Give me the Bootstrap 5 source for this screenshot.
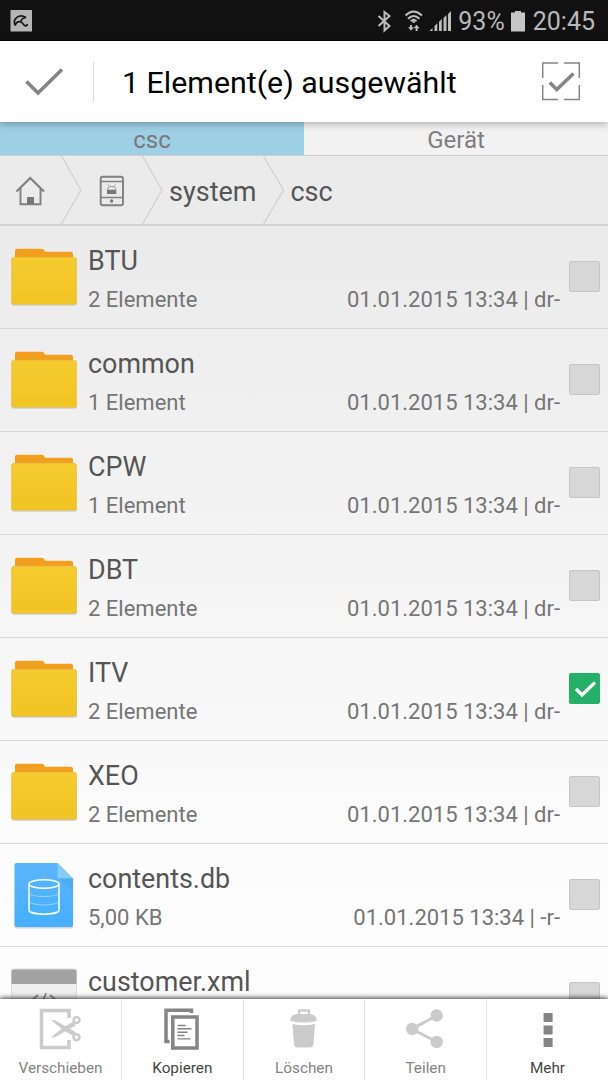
<!DOCTYPE html>
<html lang="de">
<head>
<meta charset="utf-8">
<meta name="viewport" content="width=device-width, initial-scale=1">
<title>Dateimanager</title>
<link href="https://cdn.jsdelivr.net/npm/bootstrap@5.3.0/dist/css/bootstrap.min.css" rel="stylesheet">
<style>
body{font-family:Roboto,"Noto Sans",sans-serif;color:#555;background:#fff}
svg{display:block;flex:none}
.app-screen{width:608px;height:1080px;background:linear-gradient(#ebebeb 225px,#fdfdfd 900px)}
.status-row{height:41px;background:#111;border-bottom:1px solid #000;color:#b9b9b9;font-size:25px;line-height:41px;padding:2px 13px 0 0}
.battery{margin-left:6px}
.select-bar{height:81px;background:#fff;color:#000;font-size:30.350px;z-index:2;box-shadow:0 1px 8px rgba(0,0,0,.35)}
.select-title{margin-left:28px;padding-top:2px}
.bar-rule{width:1px;height:40px;background:#ddd}
.tab-strip{height:34px;border-bottom:1px solid #d0d0d0;font-size:24px;line-height:36px;color:#7e7e7e;background:#f2f2f2}
.tab-on{background:#9dd0e5;color:#7b7878}
.crumbs{height:70px;border-bottom:2px solid #d2d2d2;font-size:27px;line-height:72px}
.file-row{height:103px;border-bottom:1px solid #d8d8d8}
.file-text{padding-top:16px;line-height:38px}
.file-title{font-size:26.900px;height:39px}
.file-meta{font-size:22px;color:#757575}
.tick{width:31px;height:31px;margin:35px 8px 0 9px;background:#d7d7d7;border:1px solid #c6c6c6;border-radius:2px;flex:none}
.tick-on{background:#24b069;border-color:#24b069}
.action-bar{height:81px;background:#fff;font-size:15.300px;line-height:22px;color:#848484;z-index:2;box-shadow:0 -1px 5px rgba(0,0,0,.8)}
.action-bar>div+div{border-left:1px solid #e6e6e6}
.act-cell{flex:1 1 0}
.act-on{color:#454545}
</style>
</head>
<body class="overflow-hidden">
<svg width="0" height="0" class="position-absolute">
  <defs>
    <linearGradient id="yel" x2="0" y2="1"><stop stop-color="#f5cb2f"/><stop offset="1" stop-color="#f2c425"/></linearGradient>
    <linearGradient id="blu" x2="0" y2="1"><stop stop-color="#5bb4fb"/><stop offset="1" stop-color="#45b0ff"/></linearGradient>
    <symbol id="folder" viewBox="0 .7 88 102">
      <path d="M15 33V25.500q0-2 2-2h25q2 0 3 3h26q2 0 2 2v5z" fill="#f29e1f"/>
      <rect x="11.500" y="32.500" width="65.500" height="48" rx="2.500" fill="#cfcfcf"/>
      <rect x="11.500" y="32" width="65" height="47" rx="2" fill="url(#yel)" stroke="#e4c34a" stroke-width=".6"/>
    </symbol>
  </defs>
</svg>
<div class="app-screen d-flex flex-column overflow-hidden">
  <div class="status-row d-flex align-items-center flex-shrink-0">
    <svg width="33" height="40"><rect x="10.500" y="9" width="21.500" height="21.500" fill="#b5b5b5"/><path d="M15.200 24.500C12 17.500 19.500 12.500 26 16.500M15.200 24.500Q16.500 20 20.800 20.800Q21.500 17 26 16.500M20.800 20.500l3.800 4q2.200 1.200 2.700-1.500" fill="none" stroke="#161616" stroke-width="1.700"/></svg>
    <svg class="ms-auto" width="86" height="40" fill="none" stroke="#bdbdbd">
      <path d="M6.500 15l11 10-5 4.500V11l5 4-11 10" stroke-width="2"/>
      <path d="M33.500 14.500Q41.500 6.500 50 14.500M36 17.800Q41.500 12 47.500 17.800M38.800 20.300Q41.500 17.500 44.500 20.300" stroke-width="2"/>
      <path d="M41.700 20v2M39 24v3M44.600 26v4" stroke-width="2"/>
      <path d="M36 26.300h6l-3 3.500zM41.600 27.200h6l-3-3.500z" fill="#bdbdbd" stroke="none"/>
      <path d="M57.500 30l3-3v3zM62.500 30v-5l2.800-2.800V30zM67 30v-9.300l2.800-2.800V30zM71.500 30v-13l3-3v16zM76 30V13l3-3v20z" fill="#bdbdbd" stroke="none"/>
    </svg>
    <span>93%</span>
    <svg class="battery" width="14" height="41"><path d="M4 10h6v1.500h4V30.500H0v-19h4z" fill="#c6c6c6"/></svg>
    <span class="ms-2">20:45</span>
  </div>
  <div class="select-bar d-flex align-items-center flex-shrink-0 position-relative">
    <svg width="93" height="81"><path d="M26.500 40.500L38 52 62 28.500" fill="none" stroke="#858585" stroke-width="3.600"/></svg>
    <div class="bar-rule"></div>
    <span class="select-title">1 Element(e) ausgewählt</span>
    <svg class="ms-auto" width="66" height="81" fill="none" stroke="#858585"><path d="M.7 37V22H16M22 22h15.300v15M37.300 44v14.500H22M16 58.500H.7V44" stroke-width="1.500"/><path d="M7.800 41.500l7 7L31.500 32.500" stroke-width="3.600"/></svg>
  </div>
  <div class="tab-strip d-flex text-center flex-shrink-0"><div class="tab-on w-50">csc</div><div class="w-50">Gerät</div></div>
  <div class="crumbs d-flex flex-shrink-0">
    <svg width="169" height="68" fill="none" stroke="#808080">
      <path d="M61.500 0l19.500 34L61.500 68M142.500 0L162 34 142.500 68" stroke="#d0d0d0" stroke-width="1.200"/>
      <path d="M16.500 35.500L30.200 22 44 35.500" stroke-width="2.300"/><path d="M20.500 32v16.200h20V32" stroke-width="1.900"/><path d="M27 41h7v7h-7z" fill="#777" stroke="none"/>
      <rect x="100.700" y="20.700" width="22.300" height="28.500" rx="2" stroke-width="1.900"/><path d="M100.500 25.500H123M100.500 41.500H123" stroke-width="1.500"/><circle cx="111.600" cy="45" r="1.700" fill="#777" stroke="none"/><path d="M107 33.700h9.300V38H107z" fill="#777" stroke="none"/><path d="M107.500 33.500q0-3 4.200-3t4.100 3M107.800 28.500l1.700 2M115.500 28.500l-1.700 2" stroke-width=".8"/>
    </svg>
    <span>system</span>
    <svg width="34" height="68"><path d="M7.500 0l20 34-20 34" fill="none" stroke="#d0d0d0" stroke-width="1.200"/></svg>
    <span>csc</span>
  </div>
  <div class="flex-grow-1 overflow-hidden">
    <div class="file-row d-flex"><svg width="88" height="102"><use href="#folder"/></svg><div class="file-text flex-grow-1"><div class="file-title">BTU</div><div class="file-meta d-flex justify-content-between"><span>2 Elemente</span><span>01.01.2015 13:34 | dr-</span></div></div><div class="tick"></div></div>
    <div class="file-row d-flex"><svg width="88" height="102"><use href="#folder"/></svg><div class="file-text flex-grow-1"><div class="file-title">common</div><div class="file-meta d-flex justify-content-between"><span>1 Element</span><span>01.01.2015 13:34 | dr-</span></div></div><div class="tick"></div></div>
    <div class="file-row d-flex"><svg width="88" height="102"><use href="#folder"/></svg><div class="file-text flex-grow-1"><div class="file-title">CPW</div><div class="file-meta d-flex justify-content-between"><span>1 Element</span><span>01.01.2015 13:34 | dr-</span></div></div><div class="tick"></div></div>
    <div class="file-row d-flex"><svg width="88" height="102"><use href="#folder"/></svg><div class="file-text flex-grow-1"><div class="file-title">DBT</div><div class="file-meta d-flex justify-content-between"><span>2 Elemente</span><span>01.01.2015 13:34 | dr-</span></div></div><div class="tick"></div></div>
    <div class="file-row d-flex"><svg width="88" height="102"><use href="#folder"/></svg><div class="file-text flex-grow-1"><div class="file-title">ITV</div><div class="file-meta d-flex justify-content-between"><span>2 Elemente</span><span>01.01.2015 13:34 | dr-</span></div></div><div class="tick tick-on"><svg width="29" height="29"><path d="M6 15l6 6L25 8.500" fill="none" stroke="#fff" stroke-width="3.200"/></svg></div></div>
    <div class="file-row d-flex"><svg width="88" height="102"><use href="#folder"/></svg><div class="file-text flex-grow-1"><div class="file-title">XEO</div><div class="file-meta d-flex justify-content-between"><span>2 Elemente</span><span>01.01.2015 13:34 | dr-</span></div></div><div class="tick"></div></div>
    <div class="file-row d-flex"><svg width="88" height="102"><rect x="14.500" y="60" width="58.500" height="24.500" rx="2" fill="#d7d7d7"/><path d="M16.500 19H57.500L73 34.500V81q0 2-2 2H16.500q-2 0-2-2V21q0-2 2-2z" fill="url(#blu)"/><path d="M57.500 19L73 34.500H59.500q-2 0-2-2z" fill="#87cdf3"/><path d="M60 34.500H73V47z" fill="#4dabf2"/><g fill="none" stroke="#fff" stroke-width="1.500"><ellipse cx="44" cy="40" rx="15" ry="4.200"/><path d="M29 40v26c0 5.500 30 5.500 30 0V40"/><path d="M29.500 49.500c4 4 25 4 29 0M29.500 58c4 4 25 4 29 0" stroke-width=".8" opacity=".5"/></g></svg><div class="file-text flex-grow-1"><div class="file-title">contents.db</div><div class="file-meta d-flex justify-content-between"><span>5,00 KB</span><span>01.01.2015 13:34 | -r-</span></div></div><div class="tick"></div></div>
    <div class="file-row d-flex"><svg width="88" height="102"><rect x="11.500" y="22" width="65" height="60" rx="2" fill="#efefef" stroke="#dcdcdc"/><path d="M11.500 37V24.500q0-2 2-2h61q2 0 2 2V37z" fill="#a2a2a2"/><path d="M38 48l-6 5 6 5M50 48l6 5-6 5M46 46l-5 13" fill="none" stroke="#888" stroke-width="1.700"/></svg><div class="file-text flex-grow-1"><div class="file-title">customer.xml</div></div><div class="tick"></div></div>
  </div>
  <div class="action-bar d-flex flex-shrink-0 text-center position-relative">
    <div class="act-cell"><svg width="121" height="58" fill="none" stroke="#cbcbcb"><path d="M69 19V11.500H41.500v37H69V41" stroke-width="3.500"/><g fill="#cbcbcb" stroke="none"><path d="M51 21l4 .3L75.500 33l-2 4-10.500-6z"/><path d="M51 38.500l4-.3L75.500 26.500l-2-4-10.500 6z"/></g><circle cx="76.500" cy="21" r="3" fill="#fff" stroke-width="2.500"/><circle cx="76.500" cy="38.300" r="3" fill="#fff" stroke-width="2.500"/></svg>Verschieben</div>
    <div class="act-cell act-on"><svg width="120" height="58" fill="none" stroke="#848484"><path d="M69.500 14V11.200H44V42.500h3.500" stroke-width="3.500"/><rect x="50.800" y="18" width="24.200" height="31" stroke-width="3.500"/><path d="M55.500 26.500h8M55.500 29.800h14M55.500 33.200h10M55.500 36.500h7M55.500 39.900h13" stroke-width="1.400"/></svg>Kopieren</div>
    <div class="act-cell"><svg width="120" height="58" fill="#cbcbcb"><path d="M55 15v-3.500h10V15" fill="none" stroke="#cbcbcb" stroke-width="2.300"/><path d="M46.500 22q-1-6 7-7h12q8 1 7 7-13 3-26 0zM48.500 25q11 2.500 22.500 0L69.500 46q-1 2.500-4 2.500H54q-3 0-4-2.500z"/></svg>Löschen</div>
    <div class="act-cell"><svg width="120" height="58" fill="#cbcbcb"><path d="M72 16.500L47 30l25 13" fill="none" stroke="#cbcbcb" stroke-width="3"/><circle cx="71.700" cy="16.500" r="6.200"/><circle cx="47.200" cy="30" r="6.200"/><circle cx="71.700" cy="43" r="6.200"/></svg>Teilen</div>
    <div class="act-cell act-on"><svg width="121" height="58" fill="#848484"><path d="M56.600 14h9v9h-9zM56.600 26.500h9v9h-9zM56.600 39h9v9h-9z"/></svg>Mehr</div>
  </div>
</div>
<script src="https://cdn.jsdelivr.net/npm/bootstrap@5.3.0/dist/js/bootstrap.bundle.min.js"></script>
</body>
</html>
